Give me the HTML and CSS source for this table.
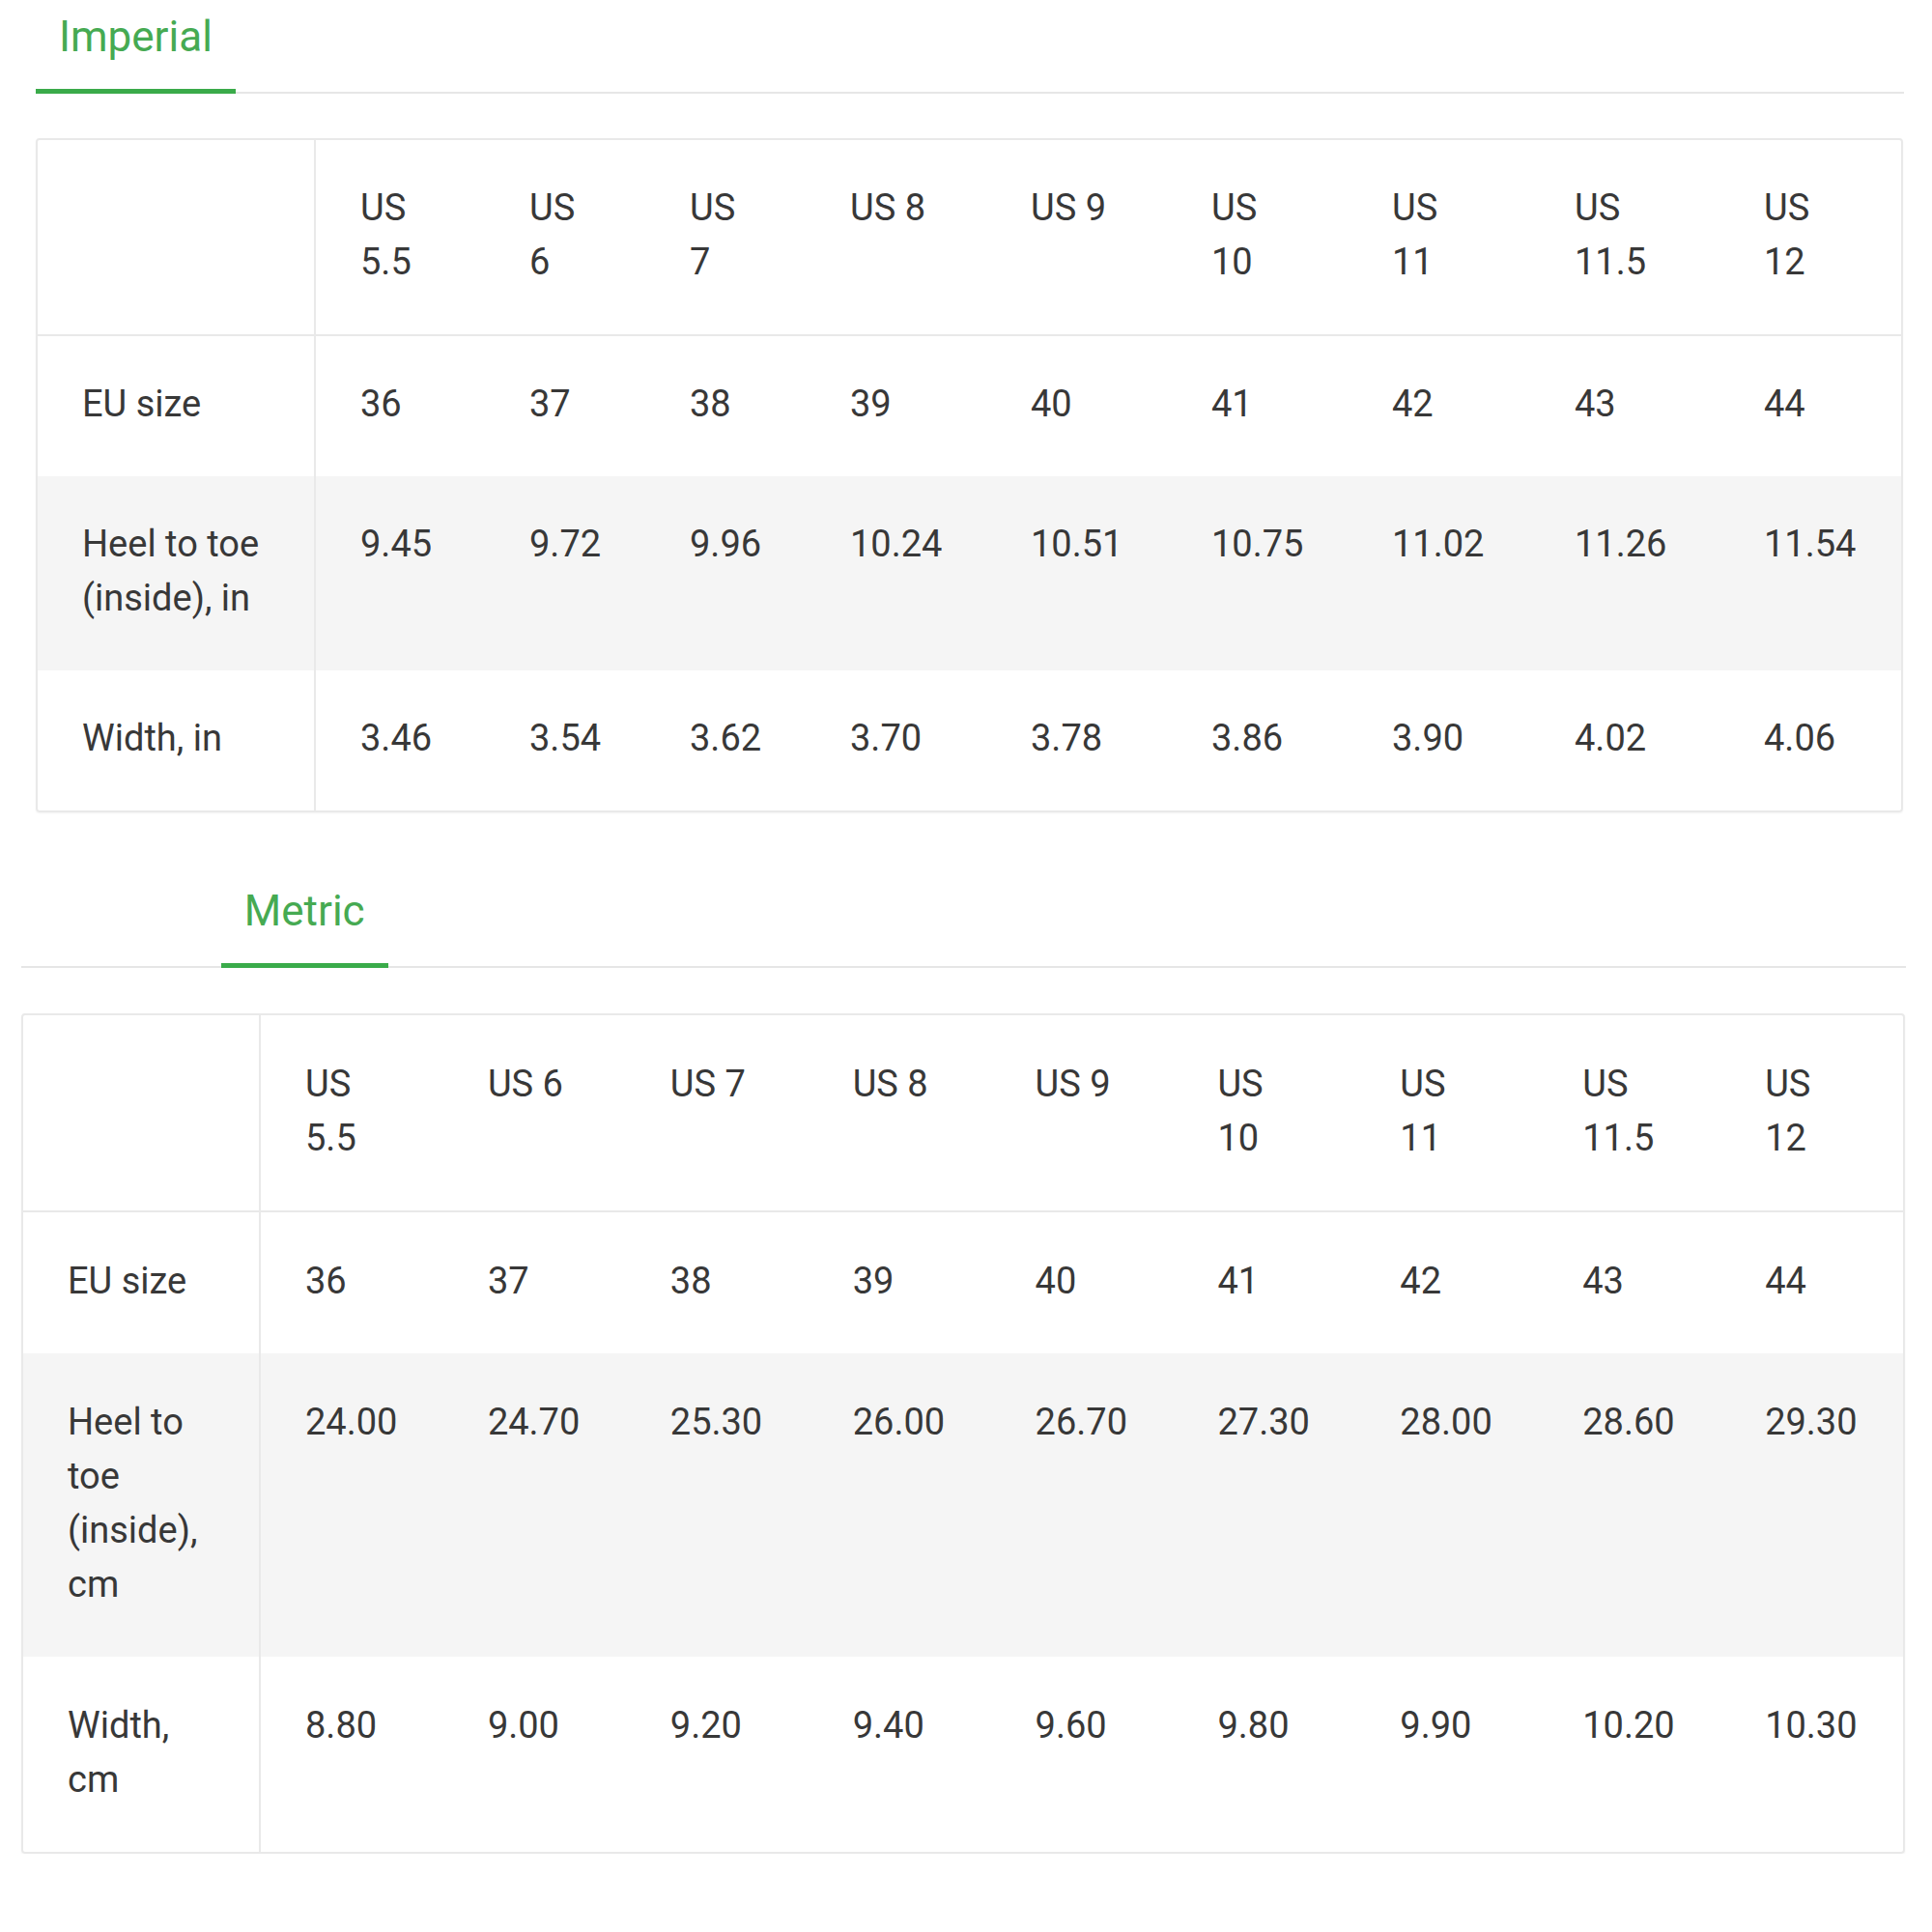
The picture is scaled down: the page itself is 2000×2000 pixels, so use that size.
FILE: index.html
```html
<!DOCTYPE html>
<html lang="en">
<head>
<meta charset="utf-8">
<title>Size chart</title>
<link rel="stylesheet" href="styles.css">
</head>
<body>
<div class="page">
  <section class="size-block size-block--imperial">
    <div class="tabs">
      <div class="tab tab--active">Imperial</div>
      <div class="tab tab--ghost">Metric</div>
    </div>
    <table class="size-table size-table--imperial">
      <colgroup>
        <col class="col-label">
        <col class="col-a1"><col class="col-a2"><col class="col-a3"><col class="col-a4"><col class="col-a5">
        <col class="col-a6"><col class="col-a7"><col class="col-a8"><col class="col-a9">
      </colgroup>
      <thead>
        <tr>
          <th class="row-label"></th>
          <th>US 5.5</th><th>US 6</th><th>US 7</th><th>US 8</th><th>US 9</th>
          <th>US 10</th><th>US 11</th><th>US 11.5</th><th>US 12</th>
        </tr>
      </thead>
      <tbody>
        <tr>
          <th class="row-label">EU size</th>
          <td>36</td><td>37</td><td>38</td><td>39</td><td>40</td><td>41</td><td>42</td><td>43</td><td>44</td>
        </tr>
        <tr class="shaded">
          <th class="row-label">Heel to toe (inside), in</th>
          <td>9.45</td><td>9.72</td><td>9.96</td><td>10.24</td><td>10.51</td><td>10.75</td><td>11.02</td><td>11.26</td><td>11.54</td>
        </tr>
        <tr>
          <th class="row-label">Width, in</th>
          <td>3.46</td><td>3.54</td><td>3.62</td><td>3.70</td><td>3.78</td><td>3.86</td><td>3.90</td><td>4.02</td><td>4.06</td>
        </tr>
      </tbody>
    </table>
  </section>

  <section class="size-block size-block--metric">
    <div class="tabs">
      <div class="tab tab--ghost">Imperial</div>
      <div class="tab tab--active">Metric</div>
    </div>
    <table class="size-table size-table--metric">
      <colgroup>
        <col class="col-label-m">
        <col class="col-b"><col class="col-b"><col class="col-b"><col class="col-b"><col class="col-b">
        <col class="col-b"><col class="col-b"><col class="col-b"><col class="col-b">
      </colgroup>
      <thead>
        <tr>
          <th class="row-label"></th>
          <th>US 5.5</th><th>US 6</th><th>US 7</th><th>US 8</th><th>US 9</th>
          <th>US 10</th><th>US 11</th><th>US 11.5</th><th>US 12</th>
        </tr>
      </thead>
      <tbody>
        <tr>
          <th class="row-label">EU size</th>
          <td>36</td><td>37</td><td>38</td><td>39</td><td>40</td><td>41</td><td>42</td><td>43</td><td>44</td>
        </tr>
        <tr class="shaded">
          <th class="row-label">Heel to toe (inside), cm</th>
          <td>24.00</td><td>24.70</td><td>25.30</td><td>26.00</td><td>26.70</td><td>27.30</td><td>28.00</td><td>28.60</td><td>29.30</td>
        </tr>
        <tr>
          <th class="row-label">Width, cm</th>
          <td>8.80</td><td>9.00</td><td>9.20</td><td>9.40</td><td>9.60</td><td>9.80</td><td>9.90</td><td>10.20</td><td>10.30</td>
        </tr>
      </tbody>
    </table>
  </section>
</div>
</body>
</html>
```

FILE: styles.css
```css
* {
  box-sizing: border-box;
}

html, body {
  margin: 0;
  padding: 0;
  background: #ffffff;
}

body {
  font-family: Roboto, "Liberation Sans", Arial, sans-serif;
  color: #383838;
}

.page {
  display: flex;
  flex-direction: column;
  gap: 64px;
  width: 2000px;
}

.size-block {
  display: flex;
  flex-direction: column;
  gap: 46px;
}

.size-block--imperial {
  margin-left: 37px;
  width: 1934px;
}

.size-block--metric {
  margin-left: 22px;
  width: 1951px;
  gap: 47px;
}

/* Tabs */
.tabs {
  display: flex;
  border-bottom: 2px solid #e6e6e6;
}

.tab {
  font-size: 44px;
  line-height: 52px;
  padding: 12px 24px 28px;
  border-bottom: 5px solid transparent;
  margin-bottom: -2px;
  white-space: nowrap;
}

.tab--active {
  color: #46aa52;
  border-bottom-color: #3aab4a;
}

.tab--ghost {
  color: #ffffff;
}

/* Tables */
.size-table {
  table-layout: fixed;
  border-collapse: separate;
  border-spacing: 0;
  border: 2px solid #e9e9e9;
  border-radius: 4px;
  box-shadow: 0 1px 2px rgba(0, 0, 0, 0.05);
  font-size: 38px;
  line-height: 56px;
  overflow: hidden;
}

.size-table--imperial {
  width: 1933px;
}

.size-table--metric {
  width: 1950px;
}

.size-table th,
.size-table td {
  font-weight: 400;
  text-align: left;
  vertical-align: top;
  padding: 42px 46px 47px;
}

.size-table--metric th,
.size-table--metric td {
  padding-top: 43px;
}

.size-table thead th {
  border-bottom: 2px solid #e9e9e9;
  padding-right: 56px;
}

.size-table .row-label {
  border-right: 2px solid #e9e9e9;
}

.size-table .shaded th,
.size-table .shaded td {
  background: #f5f5f5;
}

/* Imperial column widths */
.col-label { width: 288px; }
.col-a1 { width: 175px; }
.col-a2 { width: 166px; }
.col-a3 { width: 166px; }
.col-a4 { width: 187px; }
.col-a5 { width: 187px; }
.col-a6 { width: 187px; }
.col-a7 { width: 189px; }
.col-a8 { width: 196px; }
.col-a9 { width: 188px; }

/* Metric column widths */
.col-label-m { width: 246px; }
.col-b { width: 188.9px; }
```
